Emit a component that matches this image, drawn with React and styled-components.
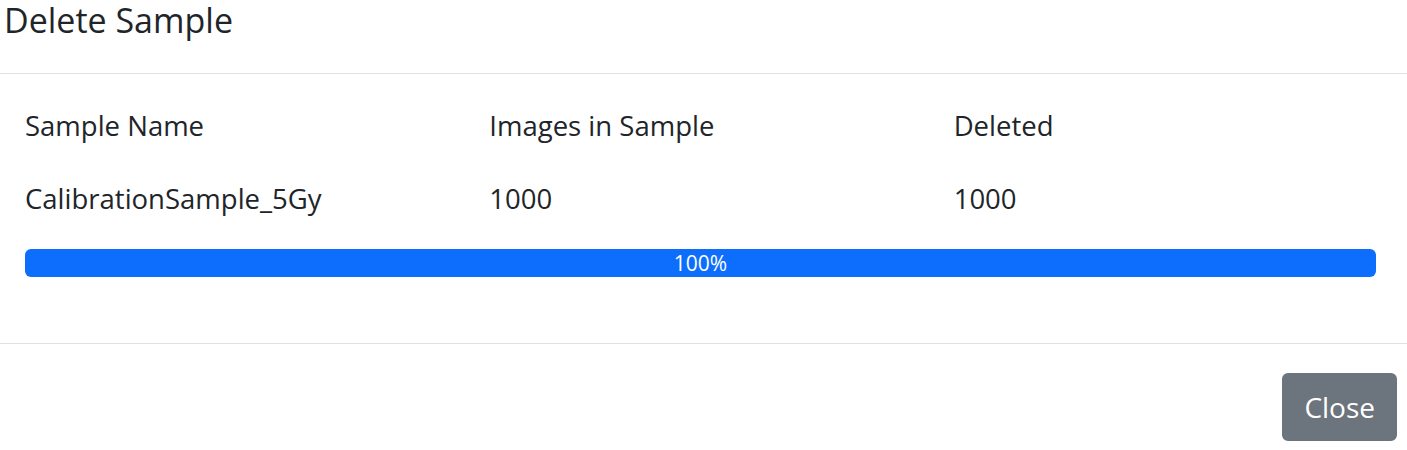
import React from 'react';
import styled, { createGlobalStyle } from 'styled-components';

const GlobalStyle = createGlobalStyle`
  html, body {
    margin: 0;
    padding: 0;
    background: #ffffff;
  }
  body {
    font-family: "Open Sans", "Noto Sans", sans-serif;
    color: #212529;
    overflow: hidden;
  }
`;

const Modal = styled.div`
  width: 1407px;
  display: flex;
  flex-direction: column;
`;

const Header = styled.div`
  height: 73px;
  border-bottom: 1px solid #dee2e6;
  padding-left: 4px;
  display: flex;
  align-items: flex-start;
`;

const Title = styled.h5`
  margin: 0;
  font-size: 34px;
  font-weight: 400;
  line-height: 40px;
`;

const Body = styled.div`
  padding: 31px 31px 66px 25px;
  border-bottom: 1px solid #dee2e6;
  display: flex;
  flex-direction: column;
`;

const Row = styled.div`
  display: grid;
  grid-template-columns: repeat(3, 1fr);
  column-gap: 42px;
  margin-bottom: ${p => p.gap}px;
`;

const Cell = styled.div`
  font-size: 27.5px;
  line-height: 42px;
`;

const Progress = styled.div`
  height: 28px;
  background: #e9ecef;
  border-radius: 6px;
  overflow: hidden;
  display: flex;
`;

const Bar = styled.div`
  background: #0d6efd;
  color: #ffffff;
  font-size: 21px;
  display: flex;
  align-items: center;
  justify-content: center;
`;

const Footer = styled.div`
  display: flex;
  justify-content: flex-end;
  padding: 29px 10px 0 0;
`;

const Button = styled.button`
  font-family: inherit;
  background: #6c757d;
  color: #ffffff;
  border: 2px solid #6c757d;
  border-radius: 6px;
  font-size: 28px;
  line-height: 42px;
  padding: 11px 20px;
  cursor: pointer;
`;

const rows = [
  ['Sample Name', 'Images in Sample', 'Deleted'],
  ['CalibrationSample_5Gy', '1000', '1000'],
];

export default function App() {
  const pct = 100;
  return (
    <>
      <GlobalStyle />
      <Modal>
        <Header>
          <Title>Delete Sample</Title>
        </Header>
        <Body>
          {rows.map((r, i) => (
            <Row key={i} gap={i === 0 ? 31 : 29}>
              {r.map((c, j) => <Cell key={j}>{c}</Cell>)}
            </Row>
          ))}
          <Progress>
            <Bar style={{ width: pct + '%' }}>{pct}%</Bar>
          </Progress>
        </Body>
        <Footer>
          <Button>Close</Button>
        </Footer>
      </Modal>
    </>
  );
}
